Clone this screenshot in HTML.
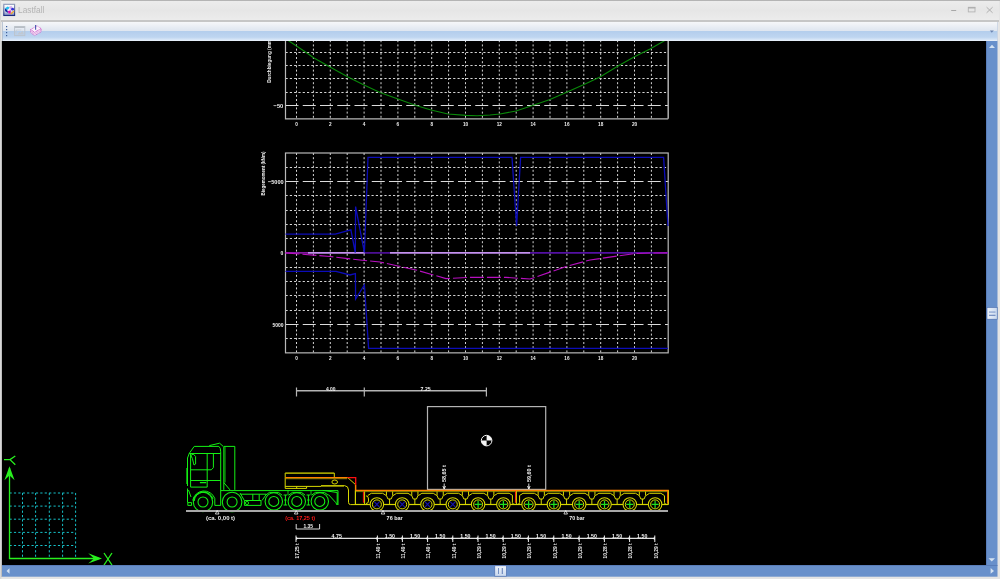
<!DOCTYPE html>
<html><head><meta charset="utf-8"><title>Lastfall</title>
<style>html,body{margin:0;padding:0;width:1000px;height:579px;overflow:hidden;background:#e4e4e4;font-family:"Liberation Sans",sans-serif;}
svg{display:block}</style></head><body>
<div style="will-change:transform;width:1000px;height:579px"><svg width="1000" height="579" viewBox="0 0 1000 579">
<rect x="0" y="0" width="1000" height="579" fill="#e4e4e4"/>
<rect x="0" y="0" width="1000" height="1" fill="#b4b4b4"/>
<rect x="0" y="0" width="1.4" height="579" fill="#d8d8d8"/>
<rect x="1.4" y="41" width="0.6" height="536" fill="#a8a8a8"/>
<defs><linearGradient id="tt" x1="0" y1="0" x2="0" y2="1"><stop offset="0" stop-color="#ececec"/><stop offset="0.5" stop-color="#e6e6e6"/><stop offset="1" stop-color="#ececec"/></linearGradient></defs>
<rect x="1" y="1" width="998" height="19" fill="url(#tt)"/>
<rect x="1" y="20" width="998" height="2" fill="#c6c6c6"/>
<defs><linearGradient id="ic" x1="0" y1="0" x2="0" y2="1"><stop offset="0" stop-color="#ffffff"/><stop offset="0.6" stop-color="#dfe4f2"/><stop offset="1" stop-color="#6878b8"/></linearGradient><linearGradient id="icb" x1="0" y1="0" x2="0" y2="1"><stop offset="0" stop-color="#8c98b8"/><stop offset="1" stop-color="#1c2c80"/></linearGradient></defs>
<rect x="3.8" y="4.3" width="10.8" height="11.2" fill="url(#ic)" stroke="url(#icb)" stroke-width="1.1"/>
<path d="M4.8 8.4 L7.6 6.6 L10 7.8 L7.4 10 Z" fill="#22c0ee"/>
<path d="M4.8 8.4 L7.4 10 L8.4 13 L5.2 11.2 Z" fill="#10249a"/>
<path d="M7.4 10 L10 7.8 L11 10.2 L8.4 13 Z" fill="#f4e4f8"/>
<path d="M7.8 11.2 L10.8 10.2 L10.6 13.4 L8.6 13.6 Z" fill="#d810b4"/>
<path d="M9.2 6.6 L11.8 6 L12.4 9 L10.4 9.8 Z" fill="#d4b0f0"/>
<circle cx="12.6" cy="9.2" r="1.4" fill="#3030d4"/>
<path d="M10.4 13.8 L13.4 10.6 L14.4 11.6 L11.4 14.6 Z" fill="#f0a828"/>
<text x="18" y="12.9" font-family="Liberation Sans" font-size="9" fill="#b4b4b4" textLength="26.4" lengthAdjust="spacingAndGlyphs">Lastfall</text>
<rect x="951.2" y="10" width="5" height="1" fill="#a8a8a8"/>
<rect x="968.3" y="7.3" width="6.7" height="4.6" fill="none" stroke="#b4b4b4" stroke-width="0.9"/>
<rect x="968" y="7" width="7.3" height="1.5" fill="#b0b0b0"/>
<path d="M986.6 7.2 L992.6 12.8 M992.6 7.2 L986.6 12.8" stroke="#b0b0b0" stroke-width="1"/>
<defs><linearGradient id="tb" x1="0" y1="0" x2="0" y2="1"><stop offset="0" stop-color="#f6f7f9"/><stop offset="0.45" stop-color="#dfe6f0"/><stop offset="0.47" stop-color="#b3cdec"/><stop offset="0.8" stop-color="#bed5f0"/><stop offset="0.93" stop-color="#d8e6f7"/><stop offset="1" stop-color="#eef4fb"/></linearGradient><linearGradient id="th" x1="0" y1="0" x2="0" y2="1"><stop offset="0" stop-color="#eef3fa"/><stop offset="1" stop-color="#c8d8ee"/></linearGradient><linearGradient id="tv" x1="0" y1="0" x2="1" y2="0"><stop offset="0" stop-color="#eef3fa"/><stop offset="1" stop-color="#c8d8ee"/></linearGradient><clipPath id="cv"><rect x="2" y="41" width="984" height="524"/></clipPath></defs>
<rect x="1" y="22" width="998" height="19" fill="#e6e6e6"/>
<rect x="2" y="22" width="995.5" height="19" fill="url(#tb)"/>
<rect x="2" y="22" width="0.8" height="19" fill="#b0bccc"/>
<rect x="6" y="26" width="1.2" height="1.2" fill="#3a5c98"/>
<rect x="6" y="29" width="1.2" height="1.2" fill="#3a5c98"/>
<rect x="6" y="32" width="1.2" height="1.2" fill="#3a5c98"/>
<rect x="6" y="35" width="1.2" height="1.2" fill="#3a5c98"/>
<rect x="14.6" y="26.6" width="10.2" height="9" fill="none" stroke="#bcc4cc" stroke-width="1"/>
<rect x="14.6" y="26.4" width="10.2" height="1.6" fill="#b8bec6"/>
<path d="M16.2 34.4 L16.2 30 L21.4 30" fill="none" stroke="#c4ccd4" stroke-width="0.8"/>
<path d="M17.2 34.5 L19.6 31.8 L20.6 33 L22.4 30.6 L24 34.5 Z" fill="#c0c8d2"/>
<path d="M30.6 29.6 L37 25.8 L41.2 28.6 L34.6 32.4 Z" fill="#fcf4fc" stroke="#d060d0" stroke-width="0.8" stroke-dasharray="1 0.6"/>
<path d="M30.6 29.6 L30.6 32.6 L34.6 35.6 L41.2 31.8 L41.2 28.6 L34.6 32.4 Z" fill="#f4e0f4" stroke="#c858c8" stroke-width="0.8" stroke-dasharray="1 0.6"/>
<path d="M30.6 31.2 L34.6 34 L41.2 30.2" fill="none" stroke="#d890d8" stroke-width="0.6"/>
<path d="M35.6 25 L35.6 29.8" stroke="#4858b0" stroke-width="1.1"/>
<path d="M989.8 30.6 L993.8 30.6 L991.8 32.8 Z" fill="#6a84b0"/>
<rect x="997" y="22" width="0.8" height="19" fill="#c8d4e4"/>
<rect x="2" y="41" width="984" height="524" fill="#000"/>
<rect x="986" y="41" width="11.5" height="524" fill="#6890cb"/>
<rect x="986" y="41" width="0.8" height="524" fill="#5578b4"/>
<path d="M989 48 L995 48 L992 44.7 Z" fill="#d4e2f2"/>
<path d="M988.5 558.3 L995 558.3 L991.75 561.5 Z" fill="#d4e2f2"/>
<rect x="987" y="307.5" width="10.2" height="11.7" fill="url(#tv)" stroke="#4a6aa8" stroke-width="0.6"/>
<rect x="989" y="311.6" width="6.5" height="0.9" fill="#6a88c0"/>
<rect x="989" y="314.8" width="6.5" height="0.9" fill="#5070b0"/>
<rect x="2" y="565" width="995.5" height="11.7" fill="#6890cb"/>
<rect x="2" y="565" width="995.5" height="0.8" fill="#5578b4"/>
<path d="M6.5 571 L9.5 568.3 L9.5 573.8 Z" fill="#d4e2f2"/>
<path d="M990.6 568 L994 570.9 L990.6 573.8 Z" fill="#d4e2f2"/>
<rect x="494.8" y="565.8" width="11.5" height="10.4" fill="url(#th)" stroke="#4a6aa8" stroke-width="0.6"/>
<rect x="498" y="568" width="0.9" height="6" fill="#6a88c0"/>
<rect x="501.8" y="568" width="0.9" height="6" fill="#5070b0"/>
<g clip-path="url(#cv)"><line x1="296.5" y1="36" x2="296.5" y2="118.8" stroke="#d4d4d4" stroke-width="1" stroke-dasharray="2 2.2"/>
<line x1="313.4" y1="36" x2="313.4" y2="118.8" stroke="#d4d4d4" stroke-width="1" stroke-dasharray="2 2.2"/>
<line x1="330.3" y1="36" x2="330.3" y2="118.8" stroke="#d4d4d4" stroke-width="1" stroke-dasharray="2 2.2"/>
<line x1="347.2" y1="36" x2="347.2" y2="118.8" stroke="#d4d4d4" stroke-width="1" stroke-dasharray="2 2.2"/>
<line x1="364.1" y1="36" x2="364.1" y2="118.8" stroke="#d4d4d4" stroke-width="1" stroke-dasharray="2 2.2"/>
<line x1="381" y1="36" x2="381" y2="118.8" stroke="#d4d4d4" stroke-width="1" stroke-dasharray="2 2.2"/>
<line x1="397.9" y1="36" x2="397.9" y2="118.8" stroke="#d4d4d4" stroke-width="1" stroke-dasharray="2 2.2"/>
<line x1="414.8" y1="36" x2="414.8" y2="118.8" stroke="#d4d4d4" stroke-width="1" stroke-dasharray="2 2.2"/>
<line x1="431.7" y1="36" x2="431.7" y2="118.8" stroke="#d4d4d4" stroke-width="1" stroke-dasharray="2 2.2"/>
<line x1="448.6" y1="36" x2="448.6" y2="118.8" stroke="#d4d4d4" stroke-width="1" stroke-dasharray="2 2.2"/>
<line x1="465.5" y1="36" x2="465.5" y2="118.8" stroke="#d4d4d4" stroke-width="1" stroke-dasharray="2 2.2"/>
<line x1="482.4" y1="36" x2="482.4" y2="118.8" stroke="#d4d4d4" stroke-width="1" stroke-dasharray="2 2.2"/>
<line x1="499.3" y1="36" x2="499.3" y2="118.8" stroke="#d4d4d4" stroke-width="1" stroke-dasharray="2 2.2"/>
<line x1="516.2" y1="36" x2="516.2" y2="118.8" stroke="#d4d4d4" stroke-width="1" stroke-dasharray="2 2.2"/>
<line x1="533.1" y1="36" x2="533.1" y2="118.8" stroke="#d4d4d4" stroke-width="1" stroke-dasharray="2 2.2"/>
<line x1="550" y1="36" x2="550" y2="118.8" stroke="#d4d4d4" stroke-width="1" stroke-dasharray="2 2.2"/>
<line x1="566.9" y1="36" x2="566.9" y2="118.8" stroke="#d4d4d4" stroke-width="1" stroke-dasharray="2 2.2"/>
<line x1="583.8" y1="36" x2="583.8" y2="118.8" stroke="#d4d4d4" stroke-width="1" stroke-dasharray="2 2.2"/>
<line x1="600.7" y1="36" x2="600.7" y2="118.8" stroke="#d4d4d4" stroke-width="1" stroke-dasharray="2 2.2"/>
<line x1="617.6" y1="36" x2="617.6" y2="118.8" stroke="#d4d4d4" stroke-width="1" stroke-dasharray="2 2.2"/>
<line x1="634.5" y1="36" x2="634.5" y2="118.8" stroke="#d4d4d4" stroke-width="1" stroke-dasharray="2 2.2"/>
<line x1="651.4" y1="36" x2="651.4" y2="118.8" stroke="#d4d4d4" stroke-width="1" stroke-dasharray="2 2.2"/>
<line x1="285.5" y1="105.5" x2="668.2" y2="105.5" stroke="#dcdcdc" stroke-width="1.2" stroke-dasharray="13 4.25"/>
<line x1="285.5" y1="92.5" x2="668.2" y2="92.5" stroke="#d4d4d4" stroke-width="1" stroke-dasharray="2.2 2.1"/>
<line x1="285.5" y1="78.5" x2="668.2" y2="78.5" stroke="#d4d4d4" stroke-width="1" stroke-dasharray="2.2 2.1"/>
<line x1="285.5" y1="65.5" x2="668.2" y2="65.5" stroke="#d4d4d4" stroke-width="1" stroke-dasharray="2.2 2.1"/>
<line x1="285.5" y1="52.5" x2="668.2" y2="52.5" stroke="#d4d4d4" stroke-width="1" stroke-dasharray="2.2 2.1"/>
<line x1="285.5" y1="38.5" x2="668.2" y2="38.5" stroke="#d4d4d4" stroke-width="1" stroke-dasharray="2.2 2.1"/>
<polyline points="285.5,30 285.5,118.8 668.2,118.8" fill="none" stroke="#b8b8b8" stroke-width="1.2"/>
<line x1="668.2" y1="30" x2="668.2" y2="118.8" stroke="#b0b0b0" stroke-width="1.5"/>
<text x="295.2" y="126" font-family="Liberation Sans" font-size="6.2" font-weight="bold" fill="#f0f0f0" textLength="2.6" lengthAdjust="spacingAndGlyphs">0</text>
<text x="329" y="126" font-family="Liberation Sans" font-size="6.2" font-weight="bold" fill="#f0f0f0" textLength="2.6" lengthAdjust="spacingAndGlyphs">2</text>
<text x="362.8" y="126" font-family="Liberation Sans" font-size="6.2" font-weight="bold" fill="#f0f0f0" textLength="2.6" lengthAdjust="spacingAndGlyphs">4</text>
<text x="396.6" y="126" font-family="Liberation Sans" font-size="6.2" font-weight="bold" fill="#f0f0f0" textLength="2.6" lengthAdjust="spacingAndGlyphs">6</text>
<text x="430.4" y="126" font-family="Liberation Sans" font-size="6.2" font-weight="bold" fill="#f0f0f0" textLength="2.6" lengthAdjust="spacingAndGlyphs">8</text>
<text x="462.9" y="126" font-family="Liberation Sans" font-size="6.2" font-weight="bold" fill="#f0f0f0" textLength="5.2" lengthAdjust="spacingAndGlyphs">10</text>
<text x="496.7" y="126" font-family="Liberation Sans" font-size="6.2" font-weight="bold" fill="#f0f0f0" textLength="5.2" lengthAdjust="spacingAndGlyphs">12</text>
<text x="530.5" y="126" font-family="Liberation Sans" font-size="6.2" font-weight="bold" fill="#f0f0f0" textLength="5.2" lengthAdjust="spacingAndGlyphs">14</text>
<text x="564.3" y="126" font-family="Liberation Sans" font-size="6.2" font-weight="bold" fill="#f0f0f0" textLength="5.2" lengthAdjust="spacingAndGlyphs">16</text>
<text x="598.1" y="126" font-family="Liberation Sans" font-size="6.2" font-weight="bold" fill="#f0f0f0" textLength="5.2" lengthAdjust="spacingAndGlyphs">18</text>
<text x="631.9" y="126" font-family="Liberation Sans" font-size="6.2" font-weight="bold" fill="#f0f0f0" textLength="5.2" lengthAdjust="spacingAndGlyphs">20</text>
<text x="273.6" y="107.5" font-family="Liberation Sans" font-size="6.2" font-weight="bold" fill="#f0f0f0" textLength="9.7" lengthAdjust="spacingAndGlyphs">−50</text>
<text transform="translate(271.2,82.8) rotate(-90)" font-family="Liberation Sans" font-size="6.2" font-weight="bold" fill="#f0f0f0" textLength="44.3" lengthAdjust="spacingAndGlyphs">Durchbiegung (mm)</text>
<polyline points="282,36 289,41 304,51 314,58 330,67 348,77 364,85 380,92.4 398,99 416,105.6 431,110 448,114 466,115.4 477,115.8 490,115 500,114 516,111 534,105 550,99.6 566,92.4 584,84.4 600,77 618,66 634,57 650,49 664,41 670,37" fill="none" stroke="#0a8a0a" stroke-width="1.1"/>
<line x1="296.5" y1="153" x2="296.5" y2="352.86" stroke="#d4d4d4" stroke-width="1" stroke-dasharray="2 2.2"/>
<line x1="313.4" y1="153" x2="313.4" y2="352.86" stroke="#d4d4d4" stroke-width="1" stroke-dasharray="2 2.2"/>
<line x1="330.3" y1="153" x2="330.3" y2="352.86" stroke="#d4d4d4" stroke-width="1" stroke-dasharray="2 2.2"/>
<line x1="347.2" y1="153" x2="347.2" y2="352.86" stroke="#d4d4d4" stroke-width="1" stroke-dasharray="2 2.2"/>
<line x1="364.1" y1="153" x2="364.1" y2="352.86" stroke="#d4d4d4" stroke-width="1" stroke-dasharray="2 2.2"/>
<line x1="381" y1="153" x2="381" y2="352.86" stroke="#d4d4d4" stroke-width="1" stroke-dasharray="2 2.2"/>
<line x1="397.9" y1="153" x2="397.9" y2="352.86" stroke="#d4d4d4" stroke-width="1" stroke-dasharray="2 2.2"/>
<line x1="414.8" y1="153" x2="414.8" y2="352.86" stroke="#d4d4d4" stroke-width="1" stroke-dasharray="2 2.2"/>
<line x1="431.7" y1="153" x2="431.7" y2="352.86" stroke="#d4d4d4" stroke-width="1" stroke-dasharray="2 2.2"/>
<line x1="448.6" y1="153" x2="448.6" y2="352.86" stroke="#d4d4d4" stroke-width="1" stroke-dasharray="2 2.2"/>
<line x1="465.5" y1="153" x2="465.5" y2="352.86" stroke="#d4d4d4" stroke-width="1" stroke-dasharray="2 2.2"/>
<line x1="482.4" y1="153" x2="482.4" y2="352.86" stroke="#d4d4d4" stroke-width="1" stroke-dasharray="2 2.2"/>
<line x1="499.3" y1="153" x2="499.3" y2="352.86" stroke="#d4d4d4" stroke-width="1" stroke-dasharray="2 2.2"/>
<line x1="516.2" y1="153" x2="516.2" y2="352.86" stroke="#d4d4d4" stroke-width="1" stroke-dasharray="2 2.2"/>
<line x1="533.1" y1="153" x2="533.1" y2="352.86" stroke="#d4d4d4" stroke-width="1" stroke-dasharray="2 2.2"/>
<line x1="550" y1="153" x2="550" y2="352.86" stroke="#d4d4d4" stroke-width="1" stroke-dasharray="2 2.2"/>
<line x1="566.9" y1="153" x2="566.9" y2="352.86" stroke="#d4d4d4" stroke-width="1" stroke-dasharray="2 2.2"/>
<line x1="583.8" y1="153" x2="583.8" y2="352.86" stroke="#d4d4d4" stroke-width="1" stroke-dasharray="2 2.2"/>
<line x1="600.7" y1="153" x2="600.7" y2="352.86" stroke="#d4d4d4" stroke-width="1" stroke-dasharray="2 2.2"/>
<line x1="617.6" y1="153" x2="617.6" y2="352.86" stroke="#d4d4d4" stroke-width="1" stroke-dasharray="2 2.2"/>
<line x1="634.5" y1="153" x2="634.5" y2="352.86" stroke="#d4d4d4" stroke-width="1" stroke-dasharray="2 2.2"/>
<line x1="651.4" y1="153" x2="651.4" y2="352.86" stroke="#d4d4d4" stroke-width="1" stroke-dasharray="2 2.2"/>
<line x1="285.5" y1="238.5" x2="668.2" y2="238.5" stroke="#d4d4d4" stroke-width="1" stroke-dasharray="2.2 2.1"/>
<line x1="285.5" y1="267.5" x2="668.2" y2="267.5" stroke="#d4d4d4" stroke-width="1" stroke-dasharray="2.2 2.1"/>
<line x1="285.5" y1="224.5" x2="668.2" y2="224.5" stroke="#d4d4d4" stroke-width="1" stroke-dasharray="2.2 2.1"/>
<line x1="285.5" y1="281.5" x2="668.2" y2="281.5" stroke="#d4d4d4" stroke-width="1" stroke-dasharray="2.2 2.1"/>
<line x1="285.5" y1="210.5" x2="668.2" y2="210.5" stroke="#d4d4d4" stroke-width="1" stroke-dasharray="2.2 2.1"/>
<line x1="285.5" y1="295.5" x2="668.2" y2="295.5" stroke="#d4d4d4" stroke-width="1" stroke-dasharray="2.2 2.1"/>
<line x1="285.5" y1="195.5" x2="668.2" y2="195.5" stroke="#d4d4d4" stroke-width="1" stroke-dasharray="2.2 2.1"/>
<line x1="285.5" y1="310.5" x2="668.2" y2="310.5" stroke="#d4d4d4" stroke-width="1" stroke-dasharray="2.2 2.1"/>
<line x1="285.5" y1="181.5" x2="668.2" y2="181.5" stroke="#dcdcdc" stroke-width="1.2" stroke-dasharray="13 4.25"/>
<line x1="285.5" y1="324.5" x2="668.2" y2="324.5" stroke="#dcdcdc" stroke-width="1.2" stroke-dasharray="13 4.25"/>
<line x1="285.5" y1="167.5" x2="668.2" y2="167.5" stroke="#d4d4d4" stroke-width="1" stroke-dasharray="2.2 2.1"/>
<line x1="285.5" y1="338.5" x2="668.2" y2="338.5" stroke="#d4d4d4" stroke-width="1" stroke-dasharray="2.2 2.1"/>
<rect x="285.5" y="153" width="382.7" height="199.86" fill="none" stroke="#b8b8b8" stroke-width="1.2"/>
<text x="295.2" y="360.2" font-family="Liberation Sans" font-size="6.2" font-weight="bold" fill="#f0f0f0" textLength="2.6" lengthAdjust="spacingAndGlyphs">0</text>
<text x="329" y="360.2" font-family="Liberation Sans" font-size="6.2" font-weight="bold" fill="#f0f0f0" textLength="2.6" lengthAdjust="spacingAndGlyphs">2</text>
<text x="362.8" y="360.2" font-family="Liberation Sans" font-size="6.2" font-weight="bold" fill="#f0f0f0" textLength="2.6" lengthAdjust="spacingAndGlyphs">4</text>
<text x="396.6" y="360.2" font-family="Liberation Sans" font-size="6.2" font-weight="bold" fill="#f0f0f0" textLength="2.6" lengthAdjust="spacingAndGlyphs">6</text>
<text x="430.4" y="360.2" font-family="Liberation Sans" font-size="6.2" font-weight="bold" fill="#f0f0f0" textLength="2.6" lengthAdjust="spacingAndGlyphs">8</text>
<text x="462.9" y="360.2" font-family="Liberation Sans" font-size="6.2" font-weight="bold" fill="#f0f0f0" textLength="5.2" lengthAdjust="spacingAndGlyphs">10</text>
<text x="496.7" y="360.2" font-family="Liberation Sans" font-size="6.2" font-weight="bold" fill="#f0f0f0" textLength="5.2" lengthAdjust="spacingAndGlyphs">12</text>
<text x="530.5" y="360.2" font-family="Liberation Sans" font-size="6.2" font-weight="bold" fill="#f0f0f0" textLength="5.2" lengthAdjust="spacingAndGlyphs">14</text>
<text x="564.3" y="360.2" font-family="Liberation Sans" font-size="6.2" font-weight="bold" fill="#f0f0f0" textLength="5.2" lengthAdjust="spacingAndGlyphs">16</text>
<text x="598.1" y="360.2" font-family="Liberation Sans" font-size="6.2" font-weight="bold" fill="#f0f0f0" textLength="5.2" lengthAdjust="spacingAndGlyphs">18</text>
<text x="631.9" y="360.2" font-family="Liberation Sans" font-size="6.2" font-weight="bold" fill="#f0f0f0" textLength="5.2" lengthAdjust="spacingAndGlyphs">20</text>
<text x="268" y="183.7" font-family="Liberation Sans" font-size="6.2" font-weight="bold" fill="#f0f0f0" textLength="15.7" lengthAdjust="spacingAndGlyphs">−5000</text>
<text x="280.5" y="255.1" font-family="Liberation Sans" font-size="6.2" font-weight="bold" fill="#f0f0f0" textLength="2.8" lengthAdjust="spacingAndGlyphs">0</text>
<text x="272.5" y="326.9" font-family="Liberation Sans" font-size="6.2" font-weight="bold" fill="#f0f0f0" textLength="11" lengthAdjust="spacingAndGlyphs">5000</text>
<text transform="translate(265.4,195.5) rotate(-90)" font-family="Liberation Sans" font-size="6.2" font-weight="bold" fill="#f0f0f0" textLength="43.9" lengthAdjust="spacingAndGlyphs">Biegemoment (kNm)</text>
<line x1="285.5" y1="252.9" x2="308" y2="252.9" stroke="#b020d8" stroke-width="1.3"/>
<line x1="308" y1="252.9" x2="365" y2="252.9" stroke="#c490f0" stroke-width="1.6"/>
<line x1="365" y1="252.9" x2="390" y2="252.9" stroke="#5410a4" stroke-width="1.6"/>
<line x1="390" y1="252.9" x2="530" y2="252.9" stroke="#c490f0" stroke-width="1.6"/>
<line x1="530" y1="252.9" x2="668" y2="252.9" stroke="#5410a4" stroke-width="1.6"/>
<polyline points="285.5,252.9 300,254 330,256.5 360,260 380,262 398,266 416,270 446,278.6 470,277.4 506,277.4 530,279 566,266.6 590,260 635,253.5 650,253 668,252.9" fill="none" stroke="#b810c0" stroke-width="1.1" stroke-dasharray="14 3"/>
<polyline points="285.5,234.2 335.3,234.2 350.9,229.8 355.3,252.6 355.6,206.6 364.4,252.6 368,157.4 512,157.4 516.6,226 520.6,157.4 663.6,157.4 668,226" fill="none" stroke="#0c0cb8" stroke-width="1.3"/>
<polyline points="285.5,271.4 336,271.4 350,275 355.4,273.6 355.6,299 364.4,285 368.6,348.4 668,348.4" fill="none" stroke="#0c0cb8" stroke-width="1.3"/>
<line x1="22.5" y1="493" x2="22.5" y2="558" stroke="#16c0c8" stroke-width="1" stroke-dasharray="2.2 2.2"/>
<line x1="35.6" y1="493" x2="35.6" y2="558" stroke="#16c0c8" stroke-width="1" stroke-dasharray="2.2 2.2"/>
<line x1="49.3" y1="493" x2="49.3" y2="558" stroke="#16c0c8" stroke-width="1" stroke-dasharray="2.2 2.2"/>
<line x1="62.6" y1="493" x2="62.6" y2="558" stroke="#16c0c8" stroke-width="1" stroke-dasharray="2.2 2.2"/>
<line x1="75.6" y1="493" x2="75.6" y2="558" stroke="#16c0c8" stroke-width="1" stroke-dasharray="2.2 2.2"/>
<line x1="9.5" y1="493" x2="75.6" y2="493" stroke="#16c0c8" stroke-width="1" stroke-dasharray="2.2 2.2"/>
<line x1="9.5" y1="506.1" x2="75.6" y2="506.1" stroke="#16c0c8" stroke-width="1" stroke-dasharray="2.2 2.2"/>
<line x1="9.5" y1="519.2" x2="75.6" y2="519.2" stroke="#16c0c8" stroke-width="1" stroke-dasharray="2.2 2.2"/>
<line x1="9.5" y1="532.4" x2="75.6" y2="532.4" stroke="#16c0c8" stroke-width="1" stroke-dasharray="2.2 2.2"/>
<line x1="9.5" y1="545.5" x2="75.6" y2="545.5" stroke="#16c0c8" stroke-width="1" stroke-dasharray="2.2 2.2"/>
<path d="M9.5 468 L9.5 558.5 L99 558.5" fill="none" stroke="#28f01e" stroke-width="1.3"/>
<path d="M9.5 466.2 L4.4 480.2 L9.5 475.6 L14.6 480.2 Z" fill="#28f01e"/>
<path d="M102 558.4 L88.2 553.2 L94 558.4 L88.2 563.6 Z" fill="#28f01e"/>
<path d="M104 553 L112 565 M112 553 L104 565" stroke="#28f01e" stroke-width="1.3"/>
<path d="M4 459.6 L10 459.6 L15.3 456 M10 459.6 L15.3 464.8" fill="none" stroke="#28f01e" stroke-width="1.3"/>
<line x1="296.5" y1="390.8" x2="486.4" y2="390.8" stroke="#b4b4b4" stroke-width="1.5"/>
<line x1="296.5" y1="387.5" x2="296.5" y2="396.5" stroke="#b4b4b4" stroke-width="1.2"/>
<line x1="364.3" y1="387.5" x2="364.3" y2="396.5" stroke="#b4b4b4" stroke-width="1.2"/>
<line x1="486.4" y1="387.5" x2="486.4" y2="396.5" stroke="#b4b4b4" stroke-width="1.2"/>
<text x="326" y="391" font-family="Liberation Sans" font-size="6.2" font-weight="bold" fill="#f0f0f0" textLength="9.6" lengthAdjust="spacingAndGlyphs">4.00</text>
<text x="420.6" y="391" font-family="Liberation Sans" font-size="6.2" font-weight="bold" fill="#f0f0f0" textLength="10" lengthAdjust="spacingAndGlyphs">7.25</text>
<rect x="427.5" y="406.6" width="118.2" height="82.8" fill="none" stroke="#b4b4b4" stroke-width="1.2"/>
<circle cx="486.6" cy="440.6" r="5.3" fill="#000" stroke="#f4f4f4" stroke-width="1"/>
<path d="M486.6 440.6 L486.6 435.3 A5.3 5.3 0 0 1 491.9 440.6 Z" fill="#f4f4f4"/>
<path d="M486.6 440.6 L486.6 445.9 A5.3 5.3 0 0 1 481.3 440.6 Z" fill="#f4f4f4"/>
<text transform="translate(446,482) rotate(-90)" font-family="Liberation Sans" font-size="6.2" font-weight="bold" fill="#f0f0f0" textLength="16.8" lengthAdjust="spacingAndGlyphs">58,65 t</text>
<path d="M444.2 483.5 L444.2 489 M442.9 486 L444.2 489 L445.5 486" fill="none" stroke="#f0f0f0" stroke-width="0.9"/>
<text transform="translate(530.6,482) rotate(-90)" font-family="Liberation Sans" font-size="6.2" font-weight="bold" fill="#f0f0f0" textLength="16.8" lengthAdjust="spacingAndGlyphs">59,60 t</text>
<path d="M528.8 483.5 L528.8 489 M527.5 486 L528.8 489 L530.1 486" fill="none" stroke="#f0f0f0" stroke-width="0.9"/>
<path d="M187.5 486 L187.5 458 L189.3 453.3 L194.2 446.4 L218.9 446.4 Q220.7 447.5 220.7 451.8 L220.7 505.4 L214.8 505.4 L214.8 498.5" fill="none" stroke="#14f014" stroke-width="1" stroke-linejoin="round"/>
<path d="M187.5 488.5 L187.5 502.6" fill="none" stroke="#14f014" stroke-width="1" stroke-linejoin="round"/>
<path d="M186.6 468 L186.6 484" fill="none" stroke="#14f014" stroke-width="0.7" stroke-linejoin="round"/>
<path d="M192.7 500.5 A11.5 11.5 0 0 1 214.8 498.5" fill="none" stroke="#14f014" stroke-width="1" stroke-linejoin="round"/>
<path d="M194.2 501 A9.6 9.6 0 0 1 213 499" fill="none" stroke="#14f014" stroke-width="1" stroke-linejoin="round"/>
<path d="M209.3 445.6 L219.6 443.2 L223.1 446.3" fill="none" stroke="#14f014" stroke-width="1" stroke-linejoin="round"/>
<path d="M189.2 453.5 L220.7 453.5" fill="none" stroke="#14f014" stroke-width="1" stroke-linejoin="round"/>
<path d="M190.6 453.5 L190.6 487.1 L207.2 487.1 L207.2 453.5" fill="none" stroke="#14f014" stroke-width="1" stroke-linejoin="round"/>
<path d="M213.4 453.5 L213.4 467.7 L211.3 469.8 L190.6 469.8" fill="none" stroke="#14f014" stroke-width="1" stroke-linejoin="round"/>
<path d="M190.8 455.5 L193.2 454 L195.6 456.5 L195.6 464 L194 465 L192.4 458.5 Z" fill="none" stroke="#14f014" stroke-width="1" stroke-linejoin="round"/>
<path d="M190.6 480.5 L220.7 480.5" fill="none" stroke="#14f014" stroke-width="1" stroke-linejoin="round"/>
<path d="M199.9 482.6 L206.2 482.6" fill="none" stroke="#14f014" stroke-width="1.3" stroke-linejoin="round"/>
<path d="M187.8 502.6 L191.6 502.6 L191.6 505.4 L187.8 505.4 Z" fill="none" stroke="#14f014" stroke-width="1" stroke-linejoin="round"/>
<path d="M188.5 490 L191 497" fill="none" stroke="#14f014" stroke-width="1" stroke-linejoin="round"/>
<path d="M223.8 489.9 L223.8 446.4 L234.8 446.4 L234.8 489.9" fill="none" stroke="#14f014" stroke-width="1" stroke-linejoin="round"/>
<path d="M225 447 L225 482.5" fill="none" stroke="#14f014" stroke-width="0.8" stroke-linejoin="round"/>
<path d="M223.8 482.6 L230 489.9" fill="none" stroke="#14f014" stroke-width="1" stroke-linejoin="round"/>
<path d="M220.7 490.6 L338 490.6 L338 505" fill="none" stroke="#14f014" stroke-width="1" stroke-linejoin="round"/>
<path d="M240.4 494.2 L266.4 494.2" fill="none" stroke="#14f014" stroke-width="1" stroke-linejoin="round"/>
<path d="M244.4 500.5 L261 500.5 L261 505.4 L244.4 505.4 Z" fill="none" stroke="#14f014" stroke-width="1" stroke-linejoin="round"/>
<circle cx="247" cy="503" r="1.6" fill="none" stroke="#14f014" stroke-width="0.9"/>
<path d="M252.8 494.2 L252.8 500.5 M259.2 494.2 L259.2 500.5" fill="none" stroke="#14f014" stroke-width="1" stroke-linejoin="round"/>
<path d="M240 493 L244.4 500.5 M266.4 494.2 L262 500.5" fill="none" stroke="#14f014" stroke-width="1" stroke-linejoin="round"/>
<path d="M322.8 490.4 L337.2 492.5 L337.2 505 M328.4 494.5 L335.6 502.4 L337.2 505" fill="none" stroke="#14f014" stroke-width="1" stroke-linejoin="round"/>
<circle cx="203" cy="502" r="9.7" fill="none" stroke="#14f014" stroke-width="1.05"/>
<circle cx="203" cy="502" r="5" fill="none" stroke="#14f014" stroke-width="1.05"/>
<circle cx="232.1" cy="502" r="9.8" fill="none" stroke="#14f014" stroke-width="1.05"/>
<circle cx="232.1" cy="502" r="5" fill="none" stroke="#14f014" stroke-width="1.05"/>
<circle cx="273.8" cy="501.4" r="8.7" fill="none" stroke="#14f014" stroke-width="1.05"/>
<circle cx="273.8" cy="501.4" r="5" fill="none" stroke="#14f014" stroke-width="1.05"/>
<path d="M265.6 495.2 L269.4 492.4 L278.4 492.4 L282.2 495.2" fill="none" stroke="#14f014" stroke-width="1" stroke-linejoin="round"/>
<circle cx="296.8" cy="501.4" r="8.7" fill="none" stroke="#14f014" stroke-width="1.05"/>
<circle cx="296.8" cy="501.4" r="5" fill="none" stroke="#14f014" stroke-width="1.05"/>
<path d="M288.6 495.2 L292.4 492.4 L301.4 492.4 L305.2 495.2" fill="none" stroke="#14f014" stroke-width="1" stroke-linejoin="round"/>
<circle cx="319.8" cy="501.4" r="8.7" fill="none" stroke="#14f014" stroke-width="1.05"/>
<circle cx="319.8" cy="501.4" r="5" fill="none" stroke="#14f014" stroke-width="1.05"/>
<path d="M311.6 495.2 L315.4 492.4 L324.4 492.4 L328.2 495.2" fill="none" stroke="#14f014" stroke-width="1" stroke-linejoin="round"/>
<path d="M283.6 495 L287.2 495 M285.4 495 L285.4 505 M283.6 505 L287.2 505 M284.2 500 L286.6 500" fill="none" stroke="#14f014" stroke-width="1" stroke-linejoin="round"/>
<path d="M288 490.4 L288 495" fill="none" stroke="#14f014" stroke-width="0.8" stroke-linejoin="round"/>
<path d="M306.6 495 L310.2 495 M308.4 495 L308.4 505 M306.6 505 L310.2 505 M307.2 500 L309.6 500" fill="none" stroke="#14f014" stroke-width="1" stroke-linejoin="round"/>
<path d="M311 490.4 L311 495" fill="none" stroke="#14f014" stroke-width="0.8" stroke-linejoin="round"/>
<path d="M285.2 477.6 L285.2 473 L334.3 473 L334.3 477.6" fill="none" stroke="#d8d800" stroke-width="1" stroke-linejoin="round"/>
<path d="M285.6 473.4 L334 473.4" fill="none" stroke="#a8a800" stroke-width="1" stroke-linejoin="round"/>
<path d="M285.6 478.7 L347 478.7" fill="none" stroke="#8c8c00" stroke-width="1" stroke-linejoin="round"/>
<path d="M285.2 477.6 L285.2 488.4 L306.6 488.4 L306.6 486.4 M296.7 486.4 L296.7 488.4" fill="none" stroke="#d8d800" stroke-width="1" stroke-linejoin="round"/>
<path d="M285.2 486.4 L321 486.4" fill="none" stroke="#d8d800" stroke-width="1" stroke-linejoin="round"/>
<path d="M321 485.6 L344.5 485.6 Q348.5 486 348.5 490 L348.5 502.3 Q348.5 504.6 350.5 504.6 L668.2 504.6" fill="none" stroke="#d8d800" stroke-width="1" stroke-linejoin="round"/>
<path d="M321 486.4 L344 486.4" fill="none" stroke="#8c8c00" stroke-width="1" stroke-linejoin="round"/>
<ellipse cx="334.7" cy="482" rx="2.8" ry="2" fill="none" stroke="#d8d800" stroke-width="1"/>
<path d="M347.7 477.6 L355.4 484.5 L355.4 504.6" fill="none" stroke="#d8d800" stroke-width="1" stroke-linejoin="round"/>
<line x1="285.2" y1="477.6" x2="347.7" y2="477.6" stroke="#ff8000" stroke-width="1.3"/>
<path d="M347.7 477.6 L355.7 477.6 L355.7 485" fill="none" stroke="#ff1010" stroke-width="1.3"/>
<path d="M355.7 485 L355.7 490.4 L668.2 490.4 L668.2 491" fill="none" stroke="#ff8000" stroke-width="1.3"/>
<path d="M668.2 491 L668.2 504.6" fill="none" stroke="#d8d800" stroke-width="1" stroke-linejoin="round"/>
<line x1="355.7" y1="491.6" x2="668.2" y2="491.6" stroke="#888800" stroke-width="1"/>
<path d="M355.4 490.4 L355.4 504.4 L668.3 504.4 L668.3 490.4" fill="none" stroke="#d8d800" stroke-width="1" stroke-linejoin="round"/>
<path d="M374.7 508.2 L379.1 508.2 L379.9 511 L373.9 511 Z" fill="#7a7a00" stroke="#d8d800" stroke-width="0.6"/>
<circle cx="376.9" cy="504.4" r="6.75" fill="#000" stroke="#d8d800" stroke-width="1.05"/>
<circle cx="376.9" cy="504.4" r="4.5" fill="none" stroke="#d8d800" stroke-width="1"/>
<path d="M374.3 501.6 L379.5 507.2 M379.5 501.6 L374.3 507.2" stroke="#1414a8" stroke-width="1.2"/>
<path d="M367.7 495.6 L371.3 493.3 L382.7 493.3 L386.3 495.6" fill="none" stroke="#d8d800" stroke-width="1"/>
<path d="M400 508.2 L404.4 508.2 L405.2 511 L399.2 511 Z" fill="#7a7a00" stroke="#d8d800" stroke-width="0.6"/>
<circle cx="402.2" cy="504.4" r="6.75" fill="#000" stroke="#d8d800" stroke-width="1.05"/>
<circle cx="402.2" cy="504.4" r="4.5" fill="none" stroke="#d8d800" stroke-width="1"/>
<path d="M399.6 501.6 L404.8 507.2 M404.8 501.6 L399.6 507.2" stroke="#1414a8" stroke-width="1.2"/>
<path d="M393 495.6 L396.6 493.3 L408 493.3 L411.6 495.6" fill="none" stroke="#d8d800" stroke-width="1"/>
<path d="M425.3 508.2 L429.7 508.2 L430.5 511 L424.5 511 Z" fill="#7a7a00" stroke="#d8d800" stroke-width="0.6"/>
<circle cx="427.5" cy="504.4" r="6.75" fill="#000" stroke="#d8d800" stroke-width="1.05"/>
<circle cx="427.5" cy="504.4" r="4.5" fill="none" stroke="#d8d800" stroke-width="1"/>
<path d="M424.9 501.6 L430.1 507.2 M430.1 501.6 L424.9 507.2" stroke="#1414a8" stroke-width="1.2"/>
<path d="M418.3 495.6 L421.9 493.3 L433.3 493.3 L436.9 495.6" fill="none" stroke="#d8d800" stroke-width="1"/>
<path d="M450.6 508.2 L455 508.2 L455.8 511 L449.8 511 Z" fill="#7a7a00" stroke="#d8d800" stroke-width="0.6"/>
<circle cx="452.8" cy="504.4" r="6.75" fill="#000" stroke="#d8d800" stroke-width="1.05"/>
<circle cx="452.8" cy="504.4" r="4.5" fill="none" stroke="#d8d800" stroke-width="1"/>
<path d="M450.2 501.6 L455.4 507.2 M455.4 501.6 L450.2 507.2" stroke="#1414a8" stroke-width="1.2"/>
<path d="M443.6 495.6 L447.2 493.3 L458.6 493.3 L462.2 495.6" fill="none" stroke="#d8d800" stroke-width="1"/>
<path d="M475.9 508.2 L480.3 508.2 L481.1 511 L475.1 511 Z" fill="#7a7a00" stroke="#d8d800" stroke-width="0.6"/>
<circle cx="478.1" cy="504.4" r="6.75" fill="#000" stroke="#d8d800" stroke-width="1.05"/>
<circle cx="478.1" cy="504.4" r="4.5" fill="none" stroke="#d8d800" stroke-width="1"/>
<path d="M474.5 504.4 L481.7 504.4 M478.1 500.8 L478.1 508" stroke="#20e020" stroke-width="1.2"/>
<path d="M468.9 495.6 L472.5 493.3 L483.9 493.3 L487.5 495.6" fill="none" stroke="#d8d800" stroke-width="1"/>
<path d="M501.2 508.2 L505.6 508.2 L506.4 511 L500.4 511 Z" fill="#7a7a00" stroke="#d8d800" stroke-width="0.6"/>
<circle cx="503.4" cy="504.4" r="6.75" fill="#000" stroke="#d8d800" stroke-width="1.05"/>
<circle cx="503.4" cy="504.4" r="4.5" fill="none" stroke="#d8d800" stroke-width="1"/>
<path d="M499.8 504.4 L507 504.4 M503.4 500.8 L503.4 508" stroke="#20e020" stroke-width="1.2"/>
<path d="M494.2 495.6 L497.8 493.3 L509.2 493.3 L512.8 495.6" fill="none" stroke="#d8d800" stroke-width="1"/>
<path d="M526.4 508.2 L530.8 508.2 L531.6 511 L525.6 511 Z" fill="#7a7a00" stroke="#d8d800" stroke-width="0.6"/>
<circle cx="528.6" cy="504.4" r="6.75" fill="#000" stroke="#d8d800" stroke-width="1.05"/>
<circle cx="528.6" cy="504.4" r="4.5" fill="none" stroke="#d8d800" stroke-width="1"/>
<path d="M525 504.4 L532.2 504.4 M528.6 500.8 L528.6 508" stroke="#20e020" stroke-width="1.2"/>
<path d="M519.4 495.6 L523 493.3 L534.4 493.3 L538 495.6" fill="none" stroke="#d8d800" stroke-width="1"/>
<path d="M551.7 508.2 L556.1 508.2 L556.9 511 L550.9 511 Z" fill="#7a7a00" stroke="#d8d800" stroke-width="0.6"/>
<circle cx="553.9" cy="504.4" r="6.75" fill="#000" stroke="#d8d800" stroke-width="1.05"/>
<circle cx="553.9" cy="504.4" r="4.5" fill="none" stroke="#d8d800" stroke-width="1"/>
<path d="M550.3 504.4 L557.5 504.4 M553.9 500.8 L553.9 508" stroke="#20e020" stroke-width="1.2"/>
<path d="M544.7 495.6 L548.3 493.3 L559.7 493.3 L563.3 495.6" fill="none" stroke="#d8d800" stroke-width="1"/>
<path d="M577 508.2 L581.4 508.2 L582.2 511 L576.2 511 Z" fill="#7a7a00" stroke="#d8d800" stroke-width="0.6"/>
<circle cx="579.2" cy="504.4" r="6.75" fill="#000" stroke="#d8d800" stroke-width="1.05"/>
<circle cx="579.2" cy="504.4" r="4.5" fill="none" stroke="#d8d800" stroke-width="1"/>
<path d="M575.6 504.4 L582.8 504.4 M579.2 500.8 L579.2 508" stroke="#20e020" stroke-width="1.2"/>
<path d="M570 495.6 L573.6 493.3 L585 493.3 L588.6 495.6" fill="none" stroke="#d8d800" stroke-width="1"/>
<path d="M602.3 508.2 L606.7 508.2 L607.5 511 L601.5 511 Z" fill="#7a7a00" stroke="#d8d800" stroke-width="0.6"/>
<circle cx="604.5" cy="504.4" r="6.75" fill="#000" stroke="#d8d800" stroke-width="1.05"/>
<circle cx="604.5" cy="504.4" r="4.5" fill="none" stroke="#d8d800" stroke-width="1"/>
<path d="M600.9 504.4 L608.1 504.4 M604.5 500.8 L604.5 508" stroke="#20e020" stroke-width="1.2"/>
<path d="M595.3 495.6 L598.9 493.3 L610.3 493.3 L613.9 495.6" fill="none" stroke="#d8d800" stroke-width="1"/>
<path d="M627.6 508.2 L632 508.2 L632.8 511 L626.8 511 Z" fill="#7a7a00" stroke="#d8d800" stroke-width="0.6"/>
<circle cx="629.8" cy="504.4" r="6.75" fill="#000" stroke="#d8d800" stroke-width="1.05"/>
<circle cx="629.8" cy="504.4" r="4.5" fill="none" stroke="#d8d800" stroke-width="1"/>
<path d="M626.2 504.4 L633.4 504.4 M629.8 500.8 L629.8 508" stroke="#20e020" stroke-width="1.2"/>
<path d="M620.6 495.6 L624.2 493.3 L635.6 493.3 L639.2 495.6" fill="none" stroke="#d8d800" stroke-width="1"/>
<path d="M652.9 508.2 L657.3 508.2 L658.1 511 L652.1 511 Z" fill="#7a7a00" stroke="#d8d800" stroke-width="0.6"/>
<circle cx="655.1" cy="504.4" r="6.75" fill="#000" stroke="#d8d800" stroke-width="1.05"/>
<circle cx="655.1" cy="504.4" r="4.5" fill="none" stroke="#d8d800" stroke-width="1"/>
<path d="M651.5 504.4 L658.7 504.4 M655.1 500.8 L655.1 508" stroke="#20e020" stroke-width="1.2"/>
<path d="M645.9 495.6 L649.5 493.3 L660.9 493.3 L664.5 495.6" fill="none" stroke="#d8d800" stroke-width="1"/>
<path d="M386.45 491.5 L386.45 495.6 L387.95 499 L391.15 499 L392.65 495.6 L392.65 491.5 M389.55 499 L389.55 504.4" fill="none" stroke="#d8d800" stroke-width="1"/>
<path d="M411.75 491.5 L411.75 495.6 L413.25 499 L416.45 499 L417.95 495.6 L417.95 491.5 M414.85 499 L414.85 504.4" fill="none" stroke="#d8d800" stroke-width="1"/>
<path d="M437.05 491.5 L437.05 495.6 L438.55 499 L441.75 499 L443.25 495.6 L443.25 491.5 M440.15 499 L440.15 504.4" fill="none" stroke="#d8d800" stroke-width="1"/>
<path d="M462.35 491.5 L462.35 495.6 L463.85 499 L467.05 499 L468.55 495.6 L468.55 491.5 M465.45 499 L465.45 504.4" fill="none" stroke="#d8d800" stroke-width="1"/>
<path d="M487.65 491.5 L487.65 495.6 L489.15 499 L492.35 499 L493.85 495.6 L493.85 491.5 M490.75 499 L490.75 504.4" fill="none" stroke="#d8d800" stroke-width="1"/>
<path d="M538.15 491.5 L538.15 495.6 L539.65 499 L542.85 499 L544.35 495.6 L544.35 491.5 M541.25 499 L541.25 504.4" fill="none" stroke="#d8d800" stroke-width="1"/>
<path d="M563.45 491.5 L563.45 495.6 L564.95 499 L568.15 499 L569.65 495.6 L569.65 491.5 M566.55 499 L566.55 504.4" fill="none" stroke="#d8d800" stroke-width="1"/>
<path d="M588.75 491.5 L588.75 495.6 L590.25 499 L593.45 499 L594.95 495.6 L594.95 491.5 M591.85 499 L591.85 504.4" fill="none" stroke="#d8d800" stroke-width="1"/>
<path d="M614.05 491.5 L614.05 495.6 L615.55 499 L618.75 499 L620.25 495.6 L620.25 491.5 M617.15 499 L617.15 504.4" fill="none" stroke="#d8d800" stroke-width="1"/>
<path d="M639.35 491.5 L639.35 495.6 L640.85 499 L644.05 499 L645.55 495.6 L645.55 491.5 M642.45 499 L642.45 504.4" fill="none" stroke="#d8d800" stroke-width="1"/>
<line x1="363.4" y1="491.5" x2="363.4" y2="502.8" stroke="#ff1010" stroke-width="1"/>
<path d="M364.6 491.5 L364.6 504.4" fill="none" stroke="#d8d800" stroke-width="1" stroke-linejoin="round"/>
<path d="M366 495.8 Q368.5 496 368.5 499 L368.5 501 Q368.5 503.5 366 503.5" fill="none" stroke="#d8d800" stroke-width="1" stroke-linejoin="round"/>
<line x1="515.5" y1="491.2" x2="515.5" y2="502.8" stroke="#ff1010" stroke-width="1.1"/>
<path d="M516.4 491.2 L516.4 504.4 M512.4 495.8 L512.4 502.5 Q512.4 504.4 514.5 504.4 M519.6 495.8 L519.6 502.5 Q519.6 504.4 517.5 504.4" fill="none" stroke="#d8d800" stroke-width="1" stroke-linejoin="round"/>
<path d="M664.5 495.8 L664.5 502.5 Q664.5 504.4 666.5 504.4" fill="none" stroke="#d8d800" stroke-width="1" stroke-linejoin="round"/>
<line x1="667.6" y1="491" x2="667.6" y2="503.5" stroke="#ff6000" stroke-width="1"/>
<line x1="186" y1="511" x2="668" y2="511" stroke="#a8a8a8" stroke-width="2"/>
<path d="M217.2 510.5 L215.4 514 L219 514 Z" fill="none" stroke="#f0f0f0" stroke-width="0.8"/>
<path d="M296.2 510.5 L294.4 514 L298 514 Z" fill="none" stroke="#f0f0f0" stroke-width="0.8"/>
<path d="M383 510.5 L381.2 514 L384.8 514 Z" fill="none" stroke="#f0f0f0" stroke-width="0.8"/>
<path d="M565.7 510.5 L563.9 514 L567.5 514 Z" fill="none" stroke="#f0f0f0" stroke-width="0.8"/>
<text x="205.9" y="519.8" font-family="Liberation Sans" font-size="6.2" font-weight="bold" fill="#f0f0f0" textLength="29.2" lengthAdjust="spacingAndGlyphs">(ca. 0,00 t)</text>
<text x="285.2" y="519.8" font-family="Liberation Sans" font-size="6.2" font-weight="bold" fill="#ff1818" textLength="29.9" lengthAdjust="spacingAndGlyphs">(ca. 17,25 t)</text>
<text x="386.6" y="520" font-family="Liberation Sans" font-size="6.2" font-weight="bold" fill="#f0f0f0" textLength="16.1" lengthAdjust="spacingAndGlyphs">76 bar</text>
<text x="569.3" y="520" font-family="Liberation Sans" font-size="6.2" font-weight="bold" fill="#f0f0f0" textLength="15.3" lengthAdjust="spacingAndGlyphs">70 bar</text>
<path d="M296.2 524 L296.2 529 L319.6 529 L319.6 524" fill="none" stroke="#f0f0f0" stroke-width="0.9"/>
<text x="303.5" y="528" font-family="Liberation Sans" font-size="6.2" font-weight="bold" fill="#f0f0f0" textLength="9.5" lengthAdjust="spacingAndGlyphs">1.35</text>
<line x1="296" y1="538.4" x2="654.8" y2="538.4" stroke="#e0e0e0" stroke-width="1.3"/>
<path d="M296 535.5 L296 542" stroke="#f0f0f0" stroke-width="1"/>
<path d="M296 536.8 L298.2 538.4 L296 540 Z" fill="#f0f0f0"/>
<text transform="translate(298.8,558.5) rotate(-90)" font-family="Liberation Sans" font-size="6.2" font-weight="bold" fill="#f0f0f0" textLength="15" lengthAdjust="spacingAndGlyphs">17,25 t</text>
<path d="M377.4 535.5 L377.4 542" stroke="#f0f0f0" stroke-width="1"/>
<path d="M377.4 536.8 L375.2 538.4 L377.4 540 Z" fill="#f0f0f0"/>
<text transform="translate(380.2,558.5) rotate(-90)" font-family="Liberation Sans" font-size="6.2" font-weight="bold" fill="#f0f0f0" textLength="15" lengthAdjust="spacingAndGlyphs">11,49 t</text>
<path d="M402.4 535.5 L402.4 542" stroke="#f0f0f0" stroke-width="1"/>
<path d="M402.4 536.8 L400.2 538.4 L402.4 540 Z" fill="#f0f0f0"/>
<text transform="translate(405.2,558.5) rotate(-90)" font-family="Liberation Sans" font-size="6.2" font-weight="bold" fill="#f0f0f0" textLength="15" lengthAdjust="spacingAndGlyphs">11,49 t</text>
<path d="M427.6 535.5 L427.6 542" stroke="#f0f0f0" stroke-width="1"/>
<path d="M427.6 536.8 L425.4 538.4 L427.6 540 Z" fill="#f0f0f0"/>
<text transform="translate(430.4,558.5) rotate(-90)" font-family="Liberation Sans" font-size="6.2" font-weight="bold" fill="#f0f0f0" textLength="15" lengthAdjust="spacingAndGlyphs">11,49 t</text>
<path d="M452.8 535.5 L452.8 542" stroke="#f0f0f0" stroke-width="1"/>
<path d="M452.8 536.8 L450.6 538.4 L452.8 540 Z" fill="#f0f0f0"/>
<text transform="translate(455.6,558.5) rotate(-90)" font-family="Liberation Sans" font-size="6.2" font-weight="bold" fill="#f0f0f0" textLength="15" lengthAdjust="spacingAndGlyphs">11,49 t</text>
<path d="M478 535.5 L478 542" stroke="#f0f0f0" stroke-width="1"/>
<path d="M478 536.8 L475.8 538.4 L478 540 Z" fill="#f0f0f0"/>
<text transform="translate(480.8,558.5) rotate(-90)" font-family="Liberation Sans" font-size="6.2" font-weight="bold" fill="#f0f0f0" textLength="15" lengthAdjust="spacingAndGlyphs">10,29 t</text>
<path d="M503.2 535.5 L503.2 542" stroke="#f0f0f0" stroke-width="1"/>
<path d="M503.2 536.8 L501 538.4 L503.2 540 Z" fill="#f0f0f0"/>
<text transform="translate(506,558.5) rotate(-90)" font-family="Liberation Sans" font-size="6.2" font-weight="bold" fill="#f0f0f0" textLength="15" lengthAdjust="spacingAndGlyphs">10,29 t</text>
<path d="M528.4 535.5 L528.4 542" stroke="#f0f0f0" stroke-width="1"/>
<path d="M528.4 536.8 L526.2 538.4 L528.4 540 Z" fill="#f0f0f0"/>
<text transform="translate(531.2,558.5) rotate(-90)" font-family="Liberation Sans" font-size="6.2" font-weight="bold" fill="#f0f0f0" textLength="15" lengthAdjust="spacingAndGlyphs">10,29 t</text>
<path d="M553.8 535.5 L553.8 542" stroke="#f0f0f0" stroke-width="1"/>
<path d="M553.8 536.8 L551.6 538.4 L553.8 540 Z" fill="#f0f0f0"/>
<text transform="translate(556.6,558.5) rotate(-90)" font-family="Liberation Sans" font-size="6.2" font-weight="bold" fill="#f0f0f0" textLength="15" lengthAdjust="spacingAndGlyphs">10,29 t</text>
<path d="M579.2 535.5 L579.2 542" stroke="#f0f0f0" stroke-width="1"/>
<path d="M579.2 536.8 L577 538.4 L579.2 540 Z" fill="#f0f0f0"/>
<text transform="translate(582,558.5) rotate(-90)" font-family="Liberation Sans" font-size="6.2" font-weight="bold" fill="#f0f0f0" textLength="15" lengthAdjust="spacingAndGlyphs">10,29 t</text>
<path d="M604.4 535.5 L604.4 542" stroke="#f0f0f0" stroke-width="1"/>
<path d="M604.4 536.8 L602.2 538.4 L604.4 540 Z" fill="#f0f0f0"/>
<text transform="translate(607.2,558.5) rotate(-90)" font-family="Liberation Sans" font-size="6.2" font-weight="bold" fill="#f0f0f0" textLength="15" lengthAdjust="spacingAndGlyphs">10,28 t</text>
<path d="M629.6 535.5 L629.6 542" stroke="#f0f0f0" stroke-width="1"/>
<path d="M629.6 536.8 L627.4 538.4 L629.6 540 Z" fill="#f0f0f0"/>
<text transform="translate(632.4,558.5) rotate(-90)" font-family="Liberation Sans" font-size="6.2" font-weight="bold" fill="#f0f0f0" textLength="15" lengthAdjust="spacingAndGlyphs">10,28 t</text>
<path d="M654.8 535.5 L654.8 542" stroke="#f0f0f0" stroke-width="1"/>
<path d="M654.8 536.8 L652.6 538.4 L654.8 540 Z" fill="#f0f0f0"/>
<text transform="translate(657.6,558.5) rotate(-90)" font-family="Liberation Sans" font-size="6.2" font-weight="bold" fill="#f0f0f0" textLength="15" lengthAdjust="spacingAndGlyphs">10,29 t</text>
<text x="331.6" y="538" font-family="Liberation Sans" font-size="6.2" font-weight="bold" fill="#f0f0f0" textLength="10.2" lengthAdjust="spacingAndGlyphs">4.75</text>
<text x="384.8" y="538" font-family="Liberation Sans" font-size="6.2" font-weight="bold" fill="#f0f0f0" textLength="10.2" lengthAdjust="spacingAndGlyphs">1.50</text>
<text x="409.9" y="538" font-family="Liberation Sans" font-size="6.2" font-weight="bold" fill="#f0f0f0" textLength="10.2" lengthAdjust="spacingAndGlyphs">1.50</text>
<text x="435.1" y="538" font-family="Liberation Sans" font-size="6.2" font-weight="bold" fill="#f0f0f0" textLength="10.2" lengthAdjust="spacingAndGlyphs">1.50</text>
<text x="460.3" y="538" font-family="Liberation Sans" font-size="6.2" font-weight="bold" fill="#f0f0f0" textLength="10.2" lengthAdjust="spacingAndGlyphs">1.50</text>
<text x="485.5" y="538" font-family="Liberation Sans" font-size="6.2" font-weight="bold" fill="#f0f0f0" textLength="10.2" lengthAdjust="spacingAndGlyphs">1.50</text>
<text x="510.7" y="538" font-family="Liberation Sans" font-size="6.2" font-weight="bold" fill="#f0f0f0" textLength="10.2" lengthAdjust="spacingAndGlyphs">1.50</text>
<text x="536" y="538" font-family="Liberation Sans" font-size="6.2" font-weight="bold" fill="#f0f0f0" textLength="10.2" lengthAdjust="spacingAndGlyphs">1.50</text>
<text x="561.4" y="538" font-family="Liberation Sans" font-size="6.2" font-weight="bold" fill="#f0f0f0" textLength="10.2" lengthAdjust="spacingAndGlyphs">1.50</text>
<text x="586.7" y="538" font-family="Liberation Sans" font-size="6.2" font-weight="bold" fill="#f0f0f0" textLength="10.2" lengthAdjust="spacingAndGlyphs">1.50</text>
<text x="611.9" y="538" font-family="Liberation Sans" font-size="6.2" font-weight="bold" fill="#f0f0f0" textLength="10.2" lengthAdjust="spacingAndGlyphs">1.50</text>
<text x="637.1" y="538" font-family="Liberation Sans" font-size="6.2" font-weight="bold" fill="#f0f0f0" textLength="10.2" lengthAdjust="spacingAndGlyphs">1.50</text></g>
</svg></div></body></html>
